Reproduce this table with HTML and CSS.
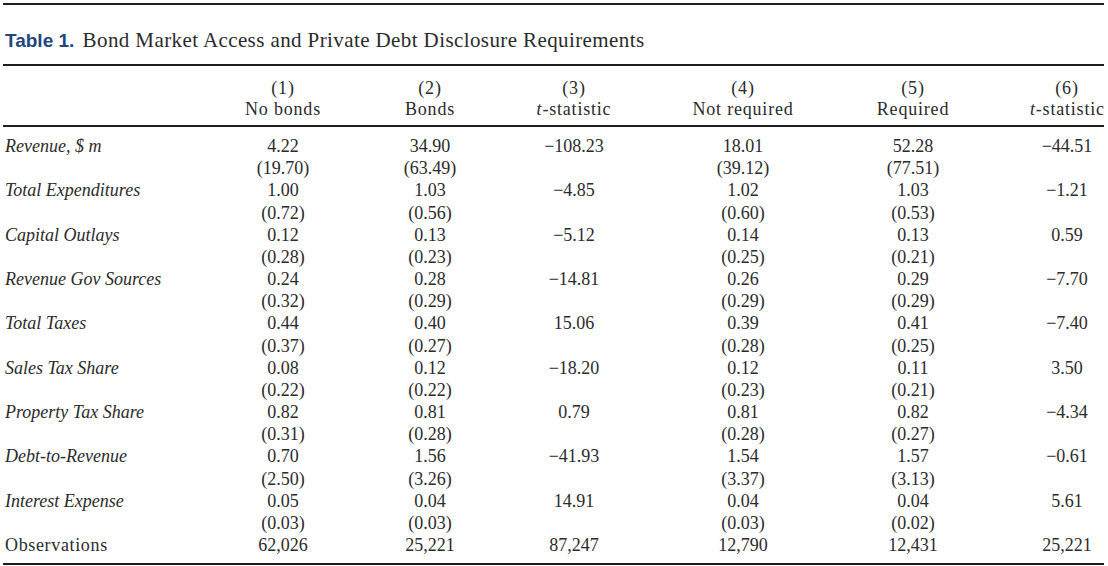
FILE: index.html
```html
<!DOCTYPE html>
<html lang="en">
<head>
<meta charset="utf-8">
<title>Table 1</title>
<link rel="stylesheet" href="styles.css">
</head>
<body>
<div class="table">
  <div class="caption"><span class="tlabel">Table 1.</span> <span class="ctext">Bond Market Access and Private Debt Disclosure Requirements</span></div>
  <div class="head grid">
    <div></div>
    <div class="c">(1)<br>No bonds</div>
    <div class="c">(2)<br>Bonds</div>
    <div class="c">(3)<br><i>t</i>-statistic</div>
    <div class="c">(4)<br>Not required</div>
    <div class="c">(5)<br>Required</div>
    <div class="c c6">(6)<br><i>t</i>-statistic</div>
  </div>
  <div class="body">
    <div class="grid row"><div class="lab">Revenue, $ m</div><div class="c">4.22<br>(19.70)</div><div class="c">34.90<br>(63.49)</div><div class="c">−108.23</div><div class="c">18.01<br>(39.12)</div><div class="c">52.28<br>(77.51)</div><div class="c c6">−44.51</div></div>
    <div class="grid row"><div class="lab">Total Expenditures</div><div class="c">1.00<br>(0.72)</div><div class="c">1.03<br>(0.56)</div><div class="c">−4.85</div><div class="c">1.02<br>(0.60)</div><div class="c">1.03<br>(0.53)</div><div class="c c6">−1.21</div></div>
    <div class="grid row"><div class="lab">Capital Outlays</div><div class="c">0.12<br>(0.28)</div><div class="c">0.13<br>(0.23)</div><div class="c">−5.12</div><div class="c">0.14<br>(0.25)</div><div class="c">0.13<br>(0.21)</div><div class="c c6">0.59</div></div>
    <div class="grid row"><div class="lab">Revenue Gov Sources</div><div class="c">0.24<br>(0.32)</div><div class="c">0.28<br>(0.29)</div><div class="c">−14.81</div><div class="c">0.26<br>(0.29)</div><div class="c">0.29<br>(0.29)</div><div class="c c6">−7.70</div></div>
    <div class="grid row"><div class="lab">Total Taxes</div><div class="c">0.44<br>(0.37)</div><div class="c">0.40<br>(0.27)</div><div class="c">15.06</div><div class="c">0.39<br>(0.28)</div><div class="c">0.41<br>(0.25)</div><div class="c c6">−7.40</div></div>
    <div class="grid row"><div class="lab">Sales Tax Share</div><div class="c">0.08<br>(0.22)</div><div class="c">0.12<br>(0.22)</div><div class="c">−18.20</div><div class="c">0.12<br>(0.23)</div><div class="c">0.11<br>(0.21)</div><div class="c c6">3.50</div></div>
    <div class="grid row"><div class="lab">Property Tax Share</div><div class="c">0.82<br>(0.31)</div><div class="c">0.81<br>(0.28)</div><div class="c">0.79</div><div class="c">0.81<br>(0.28)</div><div class="c">0.82<br>(0.27)</div><div class="c c6">−4.34</div></div>
    <div class="grid row"><div class="lab">Debt-to-Revenue</div><div class="c">0.70<br>(2.50)</div><div class="c">1.56<br>(3.26)</div><div class="c">−41.93</div><div class="c">1.54<br>(3.37)</div><div class="c">1.57<br>(3.13)</div><div class="c c6">−0.61</div></div>
    <div class="grid row"><div class="lab">Interest Expense</div><div class="c">0.05<br>(0.03)</div><div class="c">0.04<br>(0.03)</div><div class="c">14.91</div><div class="c">0.04<br>(0.03)</div><div class="c">0.04<br>(0.02)</div><div class="c c6">5.61</div></div>
    <div class="grid row obs"><div class="lab up">Observations</div><div class="c">62,026</div><div class="c">25,221</div><div class="c">87,247</div><div class="c">12,790</div><div class="c">12,431</div><div class="c c6">25,221</div></div>
  </div>
</div>
</body>
</html>
```

FILE: styles.css
```css
html, body {
  margin: 0;
  padding: 0;
  background: #ffffff;
}

body {
  font-family: "Liberation Serif", "Times New Roman", serif;
  color: #2b2b2b;
}

.table {
  margin: 3px 4px 0 3px;
  width: 1101px;
  border-top: 2px solid #1e1e1e;
}

.caption {
  font-size: 21px;
  line-height: 24px;
  padding: 23px 0 11px 2px;
  border-bottom: 2px solid #1e1e1e;
  white-space: nowrap;
}

.tlabel {
  font-family: "Liberation Sans", Arial, sans-serif;
  font-weight: bold;
  font-size: 19px;
  color: #23467f;
  margin-right: 3px;
}

.ctext {
  letter-spacing: 0.4px;
}

.grid {
  display: grid;
  grid-template-columns: 207px 146px 148px 140px 198px 142px 120px;
}

.head {
  font-size: 18px;
  line-height: 21px;
  padding: 12px 0 5px 0;
  border-bottom: 2px solid #1e1e1e;
  letter-spacing: 0.8px;
}

.body {
  font-size: 18px;
  line-height: 22.17px;
  padding: 8px 0 7px 0;
  border-bottom: 2px solid #1e1e1e;
}

.c {
  text-align: center;
  white-space: nowrap;
}

.c6 {
  padding-left: 46px;
}

.lab {
  font-style: italic;
  padding-left: 2px;
  white-space: nowrap;
}

.lab.up {
  font-style: normal;
  letter-spacing: 0.65px;
}
```
